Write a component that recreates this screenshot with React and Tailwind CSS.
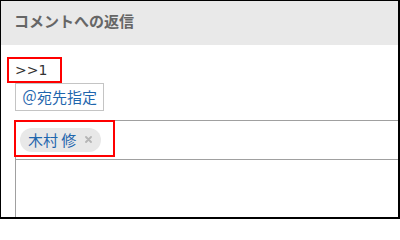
import React from 'react';

const jp = { fontFamily: '"Noto Sans CJK JP", "Noto Sans", sans-serif' };

function RecipientChip({ name }) {
  return (
    <span className="inline-flex items-center h-[24px] pl-[8px] pr-[9px] rounded-full bg-[#e8e8e8] text-[15px] leading-none text-[#1f66ad] whitespace-nowrap">
      {name}
      <svg width="7" height="7" viewBox="0 0 7 7" className="ml-[9px]">
        <path d="M1 1L6 6M6 1L1 6" stroke="#b5b5b5" strokeWidth="1.8" strokeLinecap="round" />
      </svg>
    </span>
  );
}

export default function App() {
  return (
    <div
      className="relative w-[400px] h-[219px] overflow-hidden bg-white border-l border-t border-r-2 border-b-2 border-black"
      style={jp}
    >
      {/* header */}
      <div className="h-[44px] bg-[#e9e9e9] pl-[13px] pt-[11px]">
        <h2 className="text-[15px] leading-[18px] font-bold text-[#666666]">コメントへの返信</h2>
      </div>

      <div className="pt-[12px]">
        {/* quote reference */}
        <div
          className="ml-[6px] w-[55px] h-[26px] border-2 border-[#ff0000] flex items-center pl-[6px] text-[14px] text-[#333333]"
          style={{ fontFamily: '"DejaVu Sans", sans-serif' }}
        >
          &gt;&gt;1
        </div>

        {/* mention button */}
        <button className="ml-[14px] w-[89px] h-[28px] border border-[#c4c4c4] flex items-center pl-[6px] text-[15px] text-[#1f66ad] whitespace-nowrap bg-white">
          ＠宛先指定
        </button>

        {/* recipients field */}
        <div className="relative mt-[9px] ml-[14px] w-[500px] h-[40px] border-t border-l border-b border-[#a0a0a0] pt-[6px] pl-[4px]">
          <RecipientChip name="木村 修" />
          <div className="absolute left-[-2px] top-[-1px] w-[101px] h-[37px] border-2 border-[#ff0000]" />
        </div>

        {/* body textarea */}
        <div className="ml-[14px] w-[500px] h-[80px] border-l border-[#a0a0a0]" />
      </div>
    </div>
  );
}
